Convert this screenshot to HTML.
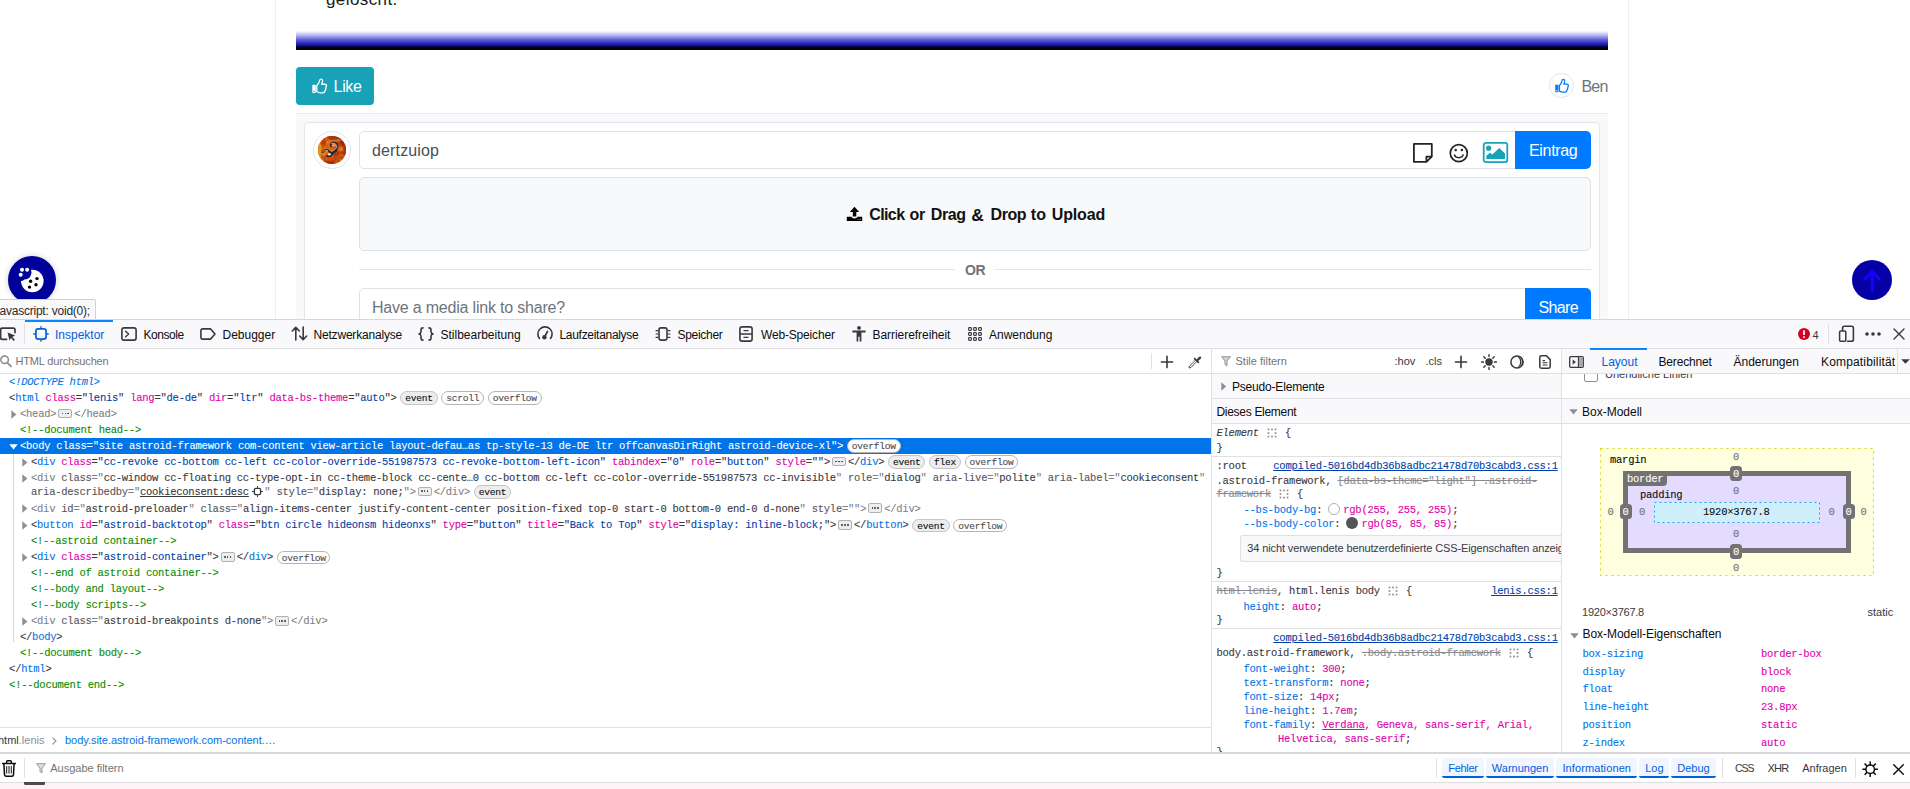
<!DOCTYPE html>
<html lang="de">
<head>
<meta charset="utf-8">
<title>DevTools</title>
<style>
html,body{margin:0;padding:0;}
body{width:1910px;height:789px;position:relative;overflow:hidden;background:#fff;font-family:"Liberation Sans",sans-serif;color:#0c0c0d;}
.a{position:absolute;white-space:nowrap;}
.b{position:absolute;box-sizing:border-box;}
.ui{font-family:"Liberation Sans",sans-serif;font-size:12px;line-height:16px;color:#0c0c0d;}
.m{font-family:"Liberation Mono",monospace;font-size:10.5px;letter-spacing:-0.25px;line-height:16px;color:#38383d;-webkit-text-stroke:.1px;}
svg{position:absolute;overflow:visible;}
/* markup colours */
.tg{color:#0074e8}.an{color:#dd00a9}.av{color:#003eaa}.cm{color:#058b00}.pn{color:#38383d}
.gr,.gr .tg,.gr .pn{color:#808085}
.gr .an{color:#55555a}
.gr .av{color:#38383d}
.sel,.sel .tg,.sel .an,.sel .av,.sel .pn{color:#fff}
.bdg{display:inline-block;box-sizing:border-box;height:13.5px;padding:0 3.75px;margin-left:3.8px;border:1px solid #b4b4b8;border-radius:7px;background:#fff;font-family:"Liberation Mono",monospace;font-size:9.6px;letter-spacing:-.26px;line-height:13.8px;color:#4a4a4f;vertical-align:middle;position:relative;top:0;text-indent:.2px;}
.bdg.ev{background:#ededf0;color:#0c0c0d;border-color:#c4c4c8;}
.ell{display:inline-block;position:relative;box-sizing:border-box;width:14px;height:9.5px;margin:0 2px 0 2px;border:1px solid #b1b1b3;border-radius:2px;background:#ededf0;vertical-align:middle;top:-.5px;}
.ell i{position:absolute;top:2.7px;width:1.6px;height:1.6px;background:#38383d;border-radius:1px;}
.tgt{position:relative;display:inline-block;width:11px;height:11px;margin:0 1.5px 0 3px;vertical-align:middle;top:-.5px;}
.tw{position:absolute;width:0;height:0;border-top:4px solid transparent;border-bottom:4px solid transparent;border-left:5px solid #8e8e93;}
/* rules colours */
.pr{color:#0074e8}.vl{color:#dd00a9}.st{color:#8a8a8f;text-decoration:line-through}
.lk{color:#003eaa;text-decoration:underline}
.m.r{color:#38383d}
.hl{position:relative;display:inline-block;vertical-align:middle;top:-.5px;margin:0 2px 0 2px;}
.sw{display:inline-block;box-sizing:border-box;width:12px;height:12px;border-radius:50%;vertical-align:middle;position:relative;top:-1.2px;margin:0 3px 0 0;}
</style>
</head>
<body>

<!-- ================= WEB PAGE (top) ================= -->
<div id="page" class="b" style="left:0;top:0;width:1910px;height:319px;overflow:hidden;background:#fff;">
  <!-- card side borders -->
  <div class="b" style="left:275px;top:0;width:1px;height:319px;background:#efefef;"></div>
  <div class="b" style="left:1628px;top:0;width:1px;height:319px;background:#efefef;"></div>
  <!-- cut-off text -->
  <div class="a" id="t_gel" style="left:326px;top:-12px;font-size:17px;letter-spacing:.4px;line-height:24px;color:#1a1a1a;">gelöscht.</div>
  <!-- gradient bar -->
  <div class="b" style="left:296px;top:31px;width:1312px;height:19px;background:linear-gradient(to bottom,#fcfcff 0%,#dcdcf8 10.5%,#a8a8ec 26%,#5c5cd6 47%,#2e2ec0 63%,#1616a0 74%,#08084c 81.5%,#000008 86%,#000 100%);"></div>
  <!-- Like button -->
  <div class="b" style="left:296px;top:67px;width:78px;height:38px;border-radius:4px;background:#17a2b8;"></div>
  <div class="a" id="t_like" style="left:333.6px;top:75px;letter-spacing:-.35px;font-size:16px;line-height:24px;color:#fff;">Like</div>
  <!-- Ben -->
  <div class="b" style="left:1549px;top:73px;width:25px;height:25px;border-radius:50%;border:1px solid #e4e6ea;background:#fff;"></div>
  <div class="a" id="t_ben" style="left:1581.5px;top:75px;letter-spacing:-.8px;font-size:16px;line-height:24px;color:#6c757d;">Ben</div>
  <!-- grey container -->
  <div class="b" style="left:296px;top:113px;width:1312px;height:210px;background:#f8f9fa;border-top:1px solid #e9ecef;"></div>
  <!-- inner card -->
  <div class="b" style="left:304px;top:122px;width:1296px;height:210px;background:#fff;border:1px solid #e3e6ea;border-radius:5px;"></div>
  <!-- avatar -->
  <div class="b" style="left:313px;top:131px;width:38px;height:38px;border-radius:50%;border:1px solid #e2e4e8;background:#fff;"></div>
  <div class="b" id="avatar" style="left:318px;top:136px;width:28px;height:28px;border-radius:50%;"></div>
  <!-- input -->
  <div class="b" style="left:359px;top:131px;width:1157px;height:38px;border:1px solid #dee2e6;border-radius:5px 0 0 5px;background:#fff;"></div>
  <div class="a" id="t_inp" style="left:372px;top:139px;letter-spacing:.15px;font-size:16px;line-height:24px;color:#495057;">dertzuiop</div>
  <!-- Eintrag -->
  <div class="b" style="left:1515px;top:131px;width:76px;height:38px;background:#007bff;border-radius:0 5px 5px 0;"></div>
  <div class="a" id="t_eintrag" style="left:1529px;top:139px;letter-spacing:-.33px;font-size:16px;line-height:24px;color:#fff;">Eintrag</div>
  <!-- upload box -->
  <div class="b" style="left:359px;top:177px;width:1232px;height:74px;border:1px solid #dee2e6;border-radius:5px;background:#f8f9fa;"></div>
  <div class="a" id="t_u0" style="letter-spacing:-0.6px;left:869.2px;top:202.5px;font-size:16px;line-height:24px;font-weight:bold;color:#111;">Click</div><div class="a" id="t_u1" style="letter-spacing:-0.35px;left:909.5px;top:202.5px;font-size:16px;line-height:24px;font-weight:bold;color:#111;">or</div><div class="a" id="t_u2" style="letter-spacing:-0.35px;left:930.7px;top:202.5px;font-size:16px;line-height:24px;font-weight:bold;color:#111;">Drag</div><div class="a" id="t_u3" style="left:971.3px;top:202.5px;font-size:17.4px;line-height:24px;font-weight:bold;color:#111;">&amp;</div><div class="a" id="t_u4" style="letter-spacing:-0.47px;left:990.6px;top:202.5px;font-size:16px;line-height:24px;font-weight:bold;color:#111;">Drop</div><div class="a" id="t_u5" style="left:1030.8px;top:202.5px;font-size:16px;line-height:24px;font-weight:bold;color:#111;">to</div><div class="a" id="t_u6" style="letter-spacing:-0.17px;left:1051.8px;top:202.5px;font-size:16px;line-height:24px;font-weight:bold;color:#111;">Upload</div>
  <!-- OR -->
  <div class="b" style="left:359px;top:269px;width:596px;height:1px;background:#e3e6ea;"></div>
  <div class="b" style="left:994px;top:269px;width:597px;height:1px;background:#e3e6ea;"></div>
  <div class="a" id="t_or" style="left:965px;top:258px;letter-spacing:-.5px;font-size:14px;line-height:24px;font-weight:bold;color:#6c757d;">OR</div>
  <!-- media link input -->
  <div class="b" style="left:359px;top:288px;width:1167px;height:38px;border:1px solid #dee2e6;border-radius:5px 0 0 5px;background:#fff;"></div>
  <div class="a" id="t_media" style="left:372px;top:296px;letter-spacing:-.2px;font-size:16px;line-height:24px;color:#6c757d;">Have a media link to share?</div>
  <div class="b" style="left:1525px;top:288px;width:66px;height:38px;background:#007bff;border-radius:0 5px 0 0;"></div>
  <div class="a" id="t_share" style="left:1538.5px;top:296px;letter-spacing:-.66px;font-size:16px;line-height:24px;color:#fff;">Share</div>
  <!-- cookie button -->
  <div class="b" style="left:8px;top:255.5px;width:48px;height:48px;border-radius:50%;background:#00009a;box-shadow:0 0 6px rgba(0,0,0,.18);"></div>
  <!-- back to top -->
  <div class="b" style="left:1852px;top:260px;width:40px;height:40px;border-radius:50%;background:#0500a6;"></div>

  <!-- like thumb -->
  <svg style="left:311.5px;top:77.6px;" width="15.2" height="15.8" viewBox="0 0 15.8 16"><rect x="0.3" y="6.9" width="3.6" height="8.4" rx=".6" fill="#fff"/><circle cx="2" cy="13.6" r=".7" fill="#17a2b8"/><path d="M5 14.1 L5 7.7 C6.3 6.6 7.3 4.9 7.7 3 C7.9 1.7 8.5 0.9 9.4 0.9 C10.6 0.9 11.1 2.1 10.9 3.5 C10.7 4.7 10.3 5.6 10 6.3 L13.3 6.3 C14.5 6.3 15.1 7.1 15.1 7.9 C15.1 8.6 14.8 9.1 14.4 9.4 C14.8 10.2 14.6 11 14 11.5 C14.2 12.3 13.9 13 13.3 13.4 C13.3 14.5 12.5 15.2 11.3 15.2 L8.7 15.2 C7.2 15.2 6.2 14.7 5 14.1 Z" fill="none" stroke="#fff" stroke-width="1.35" stroke-linejoin="round"/></svg>
  <!-- ben thumb -->
  <svg style="left:1554.5px;top:77.8px;" width="14" height="15.4" viewBox="0 0 15.8 16"><rect x="0.3" y="6.9" width="3.6" height="8.4" rx=".6" fill="#007bff"/><circle cx="2" cy="13.6" r=".7" fill="#fff"/><path d="M5 14.1 L5 7.7 C6.3 6.6 7.3 4.9 7.7 3 C7.9 1.7 8.5 0.9 9.4 0.9 C10.6 0.9 11.1 2.1 10.9 3.5 C10.7 4.7 10.3 5.6 10 6.3 L13.3 6.3 C14.5 6.3 15.1 7.1 15.1 7.9 C15.1 8.6 14.8 9.1 14.4 9.4 C14.8 10.2 14.6 11 14 11.5 C14.2 12.3 13.9 13 13.3 13.4 C13.3 14.5 12.5 15.2 11.3 15.2 L8.7 15.2 C7.2 15.2 6.2 14.7 5 14.1 Z" fill="none" stroke="#007bff" stroke-width="1.45" stroke-linejoin="round"/></svg>
  <!-- sticky note -->
  <svg style="left:1412px;top:142px;" width="22" height="22" viewBox="0 0 22 22"><path d="M1.9 1.9 H19.8 V14.6 L14.4 19.9 H1.9 Z" fill="#fff" stroke="#212529" stroke-width="1.8" stroke-linejoin="round"/><path d="M14.4 19.9 V14.6 H19.8" fill="none" stroke="#212529" stroke-width="1.8" stroke-linejoin="round"/></svg>
  <!-- smiley -->
  <svg style="left:1448px;top:143px;" width="22" height="22" viewBox="0 0 22 22"><circle cx="10.8" cy="10.2" r="8.5" fill="#fff" stroke="#212529" stroke-width="1.7"/><circle cx="7.7" cy="7.1" r="1.25" fill="#212529"/><circle cx="13.9" cy="7.1" r="1.25" fill="#212529"/><path d="M6.5 11.9 C7.6 15.6 14 15.6 15.1 11.9" fill="none" stroke="#212529" stroke-width="1.5" stroke-linecap="round"/></svg>
  <!-- image icon -->
  <svg style="left:1482px;top:141px;" width="27" height="23" viewBox="0 0 27 23"><rect x="1.7" y="1.9" width="23.6" height="19.2" rx="2.2" fill="#fff" stroke="#17a2b8" stroke-width="1.8"/><circle cx="6.7" cy="7.2" r="2.6" fill="#17a2b8"/><path d="M4.3 17.9 V14.8 L8 11.7 L10.3 13.5 L17.2 7 L23 12.4 V17.9 Z" fill="#17a2b8"/></svg>
  <!-- upload icon -->
  <svg style="left:846px;top:206px;" width="17" height="16" viewBox="0 0 17 16"><path d="M8.5 0.8 L13.2 5.9 H10.3 V10.4 H6.8 V5.9 H3.8 Z" fill="#000"/><path d="M0.8 10.8 H5.6 C5.9 11.9 7 12.4 8.5 12.4 C10 12.4 11.1 11.9 11.4 10.8 H16.2 V14.9 H0.8 Z" fill="#000"/><rect x="11.6" y="12.9" width="1.1" height="1" fill="#2a8fd0"/><rect x="13.6" y="12.9" width="1.1" height="1" fill="#e8a040"/></svg>
  <!-- cookie -->
  <svg style="left:8px;top:255.5px;" width="48" height="48" viewBox="0 0 48 48"><circle cx="24.3" cy="25" r="11.3" fill="#fff"/><circle cx="16.6" cy="16.6" r="6.9" fill="#00009a"/><circle cx="13.2" cy="21.5" r="3.4" fill="#00009a"/><circle cx="14" cy="13.8" r="2" fill="#fff"/><circle cx="19.1" cy="13.8" r="2" fill="#fff"/><circle cx="12.7" cy="18.8" r="2" fill="#fff"/><circle cx="29" cy="22.6" r="1.7" fill="#000"/><circle cx="22.6" cy="25.2" r="1.7" fill="#000"/><circle cx="28" cy="28.7" r="1.7" fill="#000"/><circle cx="21.5" cy="31.1" r="1.7" fill="#000"/></svg>
  <!-- up arrow -->
  <svg style="left:1852px;top:260px;" width="40" height="40" viewBox="0 0 40 40"><path d="M20.2 30.2 V11.8 M13.3 18.8 L20.2 11.6 L27.2 18.8" fill="none" stroke="#1a00ff" stroke-width="3" stroke-linecap="round" stroke-linejoin="round"/></svg>
  <!-- avatar texture -->
  <svg style="left:318px;top:136px;" width="28" height="28" viewBox="0 0 28 28"><defs><clipPath id="avc"><circle cx="14" cy="14" r="14"/></clipPath><radialGradient id="avg" cx="35%" cy="45%" r="70%"><stop offset="0" stop-color="#ef7a12"/><stop offset=".55" stop-color="#d84a08"/><stop offset="1" stop-color="#8c1c04"/></radialGradient></defs><filter id="fd" x="0" y="0" width="100%" height="100%"><feTurbulence type="fractalNoise" baseFrequency="0.16" numOctaves="2" seed="7"/><feColorMatrix type="matrix" values="0 0 0 0 0.42  0 0 0 0 0.06  0 0 0 0 0.01  2.6 0 0 0 -1.05"/></filter><filter id="fy" x="0" y="0" width="100%" height="100%"><feTurbulence type="fractalNoise" baseFrequency="0.14" numOctaves="2" seed="21"/><feColorMatrix type="matrix" values="0 0 0 0 0.98  0 0 0 0 0.66  0 0 0 0 0.08  0 2.8 0 0 -1.25"/></filter><g clip-path="url(#avc)"><rect width="28" height="28" fill="url(#avg)"/><rect width="28" height="28" filter="url(#fy)"/><rect width="28" height="28" filter="url(#fd)"/><path d="M0 8 C3 6 5 12 3 16 C2 20 5 24 2 27 L0 28 Z" fill="#f39a18" opacity=".85"/><path d="M8 0 C10 4 14 2 16 5 C18 2 22 3 24 1 L24 0 Z" fill="#a62605" opacity=".8"/><path d="M20 6 C24 8 26 12 27 17 C28 21 25 25 21 27 L28 28 L28 4 Z" fill="#a32404" opacity=".75"/><path d="M6 22 C9 26 14 27 19 26 L16 28 L5 28 Z" fill="#9a2204" opacity=".7"/><path d="M4 4 C6 3 9 5 8 8 C7 10 4 9 3 7 Z" fill="#b83006" opacity=".7"/><path d="M5 16.2 C6.5 13.8 9 13.2 10.4 14.6 C11.2 16 12.4 16.6 14.2 15.8 C16.8 14.6 19.4 12.8 19.6 10 C19.8 7.4 17.2 6 14.6 6.6 C12.6 7.2 12.2 9.2 13.4 10.4" fill="none" stroke="#2b2422" stroke-width="1.9" stroke-linecap="round"/><path d="M9.4 20 C11.4 20.6 13.4 19.6 14.4 17.6 C15 16.2 17 15.4 18.6 14.6" fill="none" stroke="#2b2422" stroke-width="2.2" stroke-linecap="round"/><path d="M5.4 15.8 C6.8 14.2 8.6 13.8 9.8 14.8 M13.6 15.4 C16 14.4 18.4 12.8 18.8 10.4 M13.4 7.6 C15 6.8 17.6 7.2 18.4 9" fill="none" stroke="#c9c9c9" stroke-width=".9" stroke-linecap="round"/><ellipse cx="11.3" cy="18.6" rx="1.5" ry="1" fill="#fff"/><ellipse cx="15.5" cy="9.6" rx="2" ry="1" fill="#e8a89a"/><path d="M15.6 17.6 L16.4 20.6 M17.2 16.8 L18.4 19.6 M18.8 16 L20.2 18.6" stroke="#5a1a0c" stroke-width=".7"/></g></svg>
  <!-- status tooltip -->
  <div class="b" style="left:-1px;top:299px;width:97px;height:21px;background:#f9f9fa;border:1px solid #d0d0d4;border-radius:0 2px 0 0;"></div>
  <div class="a ui" id="t_js" style="left:-3px;top:303px;letter-spacing:-.22px;color:#2a2a2e;">javascript: void(0);</div>
</div>

<!-- ================= DEVTOOLS ================= -->
<div id="dt" class="b" style="left:0;top:319px;width:1910px;height:470px;background:#fff;border-top:1px solid #d7d7db;">
</div>

<!-- toolbar -->
<div class="b" style="left:0;top:320px;width:1910px;height:28px;background:#f9f9fb;"></div>
<div class="b" style="left:0;top:348px;width:1910px;height:1px;background:#e0e0e2;"></div>
<div class="b" style="left:25px;top:320px;width:88px;height:2px;background:#0a84ff;"></div>
<div class="b" style="left:24px;top:324px;width:1px;height:20px;background:#e0e0e2;"></div>
<!-- picker -->
<svg style="left:0;top:326px;" width="17" height="16" viewBox="0 0 17 16"><path d="M6.6 13.3 H2.4 C1.3 13.3 0.6 12.6 0.6 11.5 V4 C0.6 2.9 1.3 2.2 2.4 2.2 H13.2 C14.3 2.2 15 2.9 15 4 V6.6" fill="none" stroke="#38383d" stroke-width="1.7" stroke-linecap="round"/><path d="M7.6 6.6 L15.2 9.6 L12.2 10.9 L14.9 13.8 L13.7 14.9 L11 12 L9.4 14.6 Z" fill="#38383d"/></svg>
<!-- inspector icon -->
<svg style="left:33px;top:326px;" width="16" height="16" viewBox="0 0 16 16"><rect x="2.9" y="2.9" width="10.2" height="10.2" rx="2.3" fill="none" stroke="#0060df" stroke-width="1.7"/><path d="M8 0.3 V2.4 M8 13.6 V15.7 M0.3 8 H2.4 M13.6 8 H15.7" stroke="#0060df" stroke-width="1.3"/></svg>
<div class="a ui" id="d_insp" style="left:55px;top:327px;color:#0060df;">Inspektor</div>
<!-- console icon -->
<svg style="left:121px;top:327px;" width="16" height="14" viewBox="0 0 16 14"><rect x="0.9" y="0.9" width="14.2" height="12.2" rx="2.2" fill="none" stroke="#38383d" stroke-width="1.6"/><path d="M4.6 4.2 L7.6 7 L4.6 9.8" fill="none" stroke="#38383d" stroke-width="1.4" stroke-linecap="round" stroke-linejoin="round"/></svg>
<div class="a ui" id="d_kons" style="letter-spacing:-.44px;left:143.5px;top:327px;">Konsole</div>
<!-- debugger icon -->
<svg style="left:200px;top:328px;" width="16" height="12" viewBox="0 0 16 12"><path d="M2.6 0.9 H10.6 L15 6 L10.6 11.1 H2.6 C1.6 11.1 0.9 10.4 0.9 9.4 V2.6 C0.9 1.6 1.6 0.9 2.6 0.9 Z" fill="none" stroke="#38383d" stroke-width="1.6" stroke-linejoin="round"/></svg>
<div class="a ui" id="d_debu" style="left:222.5px;top:327px;">Debugger</div>
<!-- network icon -->
<svg style="left:291px;top:326px;" width="17" height="15" viewBox="0 0 17 15"><path d="M4.8 14 V1.6 M1.3 5 L4.8 1.4 L8.3 5 M12.2 1 V13.4 M8.7 10 L12.2 13.6 L15.7 10" fill="none" stroke="#38383d" stroke-width="1.6" stroke-linecap="round" stroke-linejoin="round"/></svg>
<div class="a ui" id="d_netz" style="letter-spacing:-.19px;left:313.5px;top:327px;">Netzwerkanalyse</div>
<!-- style editor icon -->
<svg style="left:418px;top:327px;" width="16" height="14" viewBox="0 0 16 14"><path d="M5 0.9 C3.4 0.9 3 1.7 3 3 V4.6 C3 5.9 2.4 6.7 1 7 C2.4 7.3 3 8.1 3 9.4 V11 C3 12.3 3.4 13.1 5 13.1 M11 0.9 C12.6 0.9 13 1.7 13 3 V4.6 C13 5.9 13.6 6.7 15 7 C13.6 7.3 13 8.1 13 9.4 V11 C13 12.3 12.6 13.1 11 13.1" fill="none" stroke="#38383d" stroke-width="1.6" stroke-linecap="round" stroke-linejoin="round"/></svg>
<div class="a ui" id="d_stil" style="left:440.5px;top:327px;">Stilbearbeitung</div>
<!-- performance icon -->
<svg style="left:537px;top:326px;" width="16" height="14" viewBox="0 0 16 14"><path d="M2.5 12.4 C1.4 11 0.9 9.6 0.9 8 C0.9 4 4 0.9 8 0.9 C12 0.9 15.1 4 15.1 8 C15.1 9.6 14.6 11 13.5 12.4" fill="none" stroke="#38383d" stroke-width="1.6" stroke-linecap="round"/><circle cx="7.4" cy="11.3" r="2.2" fill="#38383d"/><path d="M7.6 11 L10.5 5.4" stroke="#38383d" stroke-width="1.7" stroke-linecap="round"/></svg>
<div class="a ui" id="d_lauf" style="letter-spacing:-.3px;left:559.5px;top:327px;">Laufzeitanalyse</div>
<!-- memory icon -->
<svg style="left:655px;top:327px;" width="16" height="14" viewBox="0 0 16 14"><rect x="4" y="0.9" width="8" height="12.2" rx="2" fill="none" stroke="#38383d" stroke-width="1.6"/><path d="M0.6 3.6 H3 M0.6 7 H3 M0.6 10.4 H3 M13 3.6 H15.4 M13 7 H15.4 M13 10.4 H15.4" stroke="#38383d" stroke-width="1.1"/></svg>
<div class="a ui" id="d_spei" style="letter-spacing:-.3px;left:677.5px;top:327px;">Speicher</div>
<!-- storage icon -->
<svg style="left:739px;top:326px;" width="14" height="16" viewBox="0 0 14 16"><rect x="0.9" y="0.9" width="12.2" height="14.2" rx="2.2" fill="none" stroke="#38383d" stroke-width="1.6"/><path d="M1 8 H13 M4.5 4.6 H9.5 M4.5 11.4 H9.5" stroke="#38383d" stroke-width="1.3"/></svg>
<div class="a ui" id="d_webs" style="letter-spacing:-.175px;left:761px;top:327px;">Web-Speicher</div>
<!-- accessibility icon -->
<svg style="left:852px;top:326px;" width="14" height="16" viewBox="0 0 14 16"><circle cx="7" cy="1.9" r="1.9" fill="#38383d"/><path d="M0.4 4.6 H13.6 V6.6 H9.4 V15.6 H7.7 V10.8 H6.3 V15.6 H4.6 V6.6 H0.4 Z" fill="#38383d"/></svg>
<div class="a ui" id="d_barr" style="letter-spacing:-.05px;left:872.5px;top:327px;">Barrierefreiheit</div>
<!-- application icon -->
<svg style="left:968px;top:327px;" width="14" height="14" viewBox="0 0 14 14"><g fill="none" stroke="#38383d" stroke-width="1.1"><rect x="0.6" y="0.6" width="2.8" height="2.8" rx=".8"/><rect x="5.6" y="0.6" width="2.8" height="2.8" rx=".8"/><rect x="10.6" y="0.6" width="2.8" height="2.8" rx=".8"/><rect x="0.6" y="5.6" width="2.8" height="2.8" rx=".8"/><rect x="5.6" y="5.6" width="2.8" height="2.8" rx=".8"/><rect x="10.6" y="5.6" width="2.8" height="2.8" rx=".8"/><rect x="0.6" y="10.6" width="2.8" height="2.8" rx=".8"/><rect x="5.6" y="10.6" width="2.8" height="2.8" rx=".8"/><rect x="10.6" y="10.6" width="2.8" height="2.8" rx=".8"/></g></svg>
<div class="a ui" id="d_anwe" style="left:989px;top:327px;">Anwendung</div>
<!-- right controls -->
<svg style="left:1798px;top:328px;" width="12" height="12" viewBox="0 0 12 12"><circle cx="6" cy="6" r="6" fill="#d70022"/><rect x="5.1" y="2.2" width="1.8" height="4.8" rx=".5" fill="#fff"/><rect x="5.1" y="8.2" width="1.8" height="1.7" rx=".4" fill="#fff"/></svg>
<div class="a ui" id="d_four" style="left:1812.5px;top:327px;color:#38383d;font-size:11px;">4</div>
<div class="b" style="left:1828px;top:324px;width:1px;height:20px;background:#e0e0e2;"></div>
<svg style="left:1838px;top:325px;" width="17" height="18" viewBox="0 0 17 18"><path d="M4.6 5 V3 C4.6 1.9 5.3 1.2 6.4 1.2 H13.6 C14.7 1.2 15.4 1.9 15.4 3 V14.4 C15.4 15.5 14.7 16.2 13.6 16.2 H9.6" fill="none" stroke="#38383d" stroke-width="1.6" stroke-linecap="round"/><rect x="1.6" y="6" width="6.2" height="10.2" rx="1" fill="none" stroke="#38383d" stroke-width="1.5"/></svg>
<svg style="left:1864px;top:331px;" width="18" height="6" viewBox="0 0 18 6"><circle cx="3" cy="3" r="1.8" fill="#38383d"/><circle cx="9" cy="3" r="1.8" fill="#38383d"/><circle cx="15" cy="3" r="1.8" fill="#38383d"/></svg>
<svg style="left:1893px;top:328px;" width="12" height="12" viewBox="0 0 12 12"><path d="M1 1 L11 11 M11 1 L1 11" stroke="#38383d" stroke-width="1.4" stroke-linecap="round"/></svg>

<!-- markup view -->
<div class="b" style="left:0;top:438px;width:1211px;height:16px;background:#0074e8;"></div>
<div class="b" style="left:13px;top:454px;width:1px;height:188px;background:#d7d7db;"></div>
<div class="a m " id="m1" style="left:9.1px;top:374px;"><span class="tg" style="font-style:italic">&lt;!DOCTYPE html&gt;</span></div>
<div class="a m " id="m2" style="left:9.1px;top:390px;"><span class="pn">&lt;</span><span class="tg">html</span> <span class="an">class</span><span class="pn">=&quot;</span><span class="av">lenis</span><span class="pn">&quot;</span> <span class="an">lang</span><span class="pn">=&quot;</span><span class="av">de-de</span><span class="pn">&quot;</span> <span class="an">dir</span><span class="pn">=&quot;</span><span class="av">ltr</span><span class="pn">&quot;</span> <span class="an">data-bs-theme</span><span class="pn">=&quot;</span><span class="av">auto</span><span class="pn">&quot;</span><span class="pn">&gt;</span><span class="bdg ev">event</span><span class="bdg">scroll</span><span class="bdg">overflow</span></div>
<svg style="left:11px;top:409.5px;" width="6" height="9" viewBox="0 0 6 9"><path d="M0.3 0.3 L5.4 4.5 L0.3 8.7 Z" fill="#8e8e93"/></svg>
<div class="a m gr" id="m3" style="left:20px;top:406px;"><span class="pn">&lt;</span><span class="tg">head</span><span class="pn">&gt;</span><span class="ell"><i style="left:2.4px"></i><i style="left:5.2px"></i><i style="left:8px"></i></span><span class="pn">&lt;/</span><span class="tg">head</span><span class="pn">&gt;</span></div>
<div class="a m " id="m4" style="left:20px;top:422px;"><span class="cm">&lt;!--document head--&gt;</span></div>
<svg style="left:9px;top:443.5px;" width="9" height="6" viewBox="0 0 9 6"><path d="M0.3 0.3 L8.7 0.3 L4.5 5.6 Z" fill="#fff"/></svg>
<div class="a m sel" id="m5" style="left:20px;top:438px;"><span class="pn">&lt;</span><span class="tg">body</span> <span class="an">class</span><span class="pn">=&quot;</span><span class="av">site astroid-framework com-content view-article layout-defau…as tp-style-13 de-DE ltr offcanvasDirRight astroid-device-xl</span><span class="pn">&quot;</span><span class="pn">&gt;</span><span class="bdg">overflow</span></div>
<svg style="left:22px;top:457.5px;" width="6" height="9" viewBox="0 0 6 9"><path d="M0.3 0.3 L5.4 4.5 L0.3 8.7 Z" fill="#8e8e93"/></svg>
<div class="a m " id="m6" style="left:31px;top:454px;"><span class="pn">&lt;</span><span class="tg">div</span> <span class="an">class</span><span class="pn">=&quot;</span><span class="av">cc-revoke cc-bottom cc-left cc-color-override-551987573 cc-revoke-bottom-left-icon</span><span class="pn">&quot;</span> <span class="an">tabindex</span><span class="pn">=&quot;</span><span class="av">0</span><span class="pn">&quot;</span> <span class="an">role</span><span class="pn">=&quot;</span><span class="av">button</span><span class="pn">&quot;</span> <span class="an">style</span><span class="pn">=&quot;</span><span class="av"></span><span class="pn">&quot;</span><span class="pn">&gt;</span><span class="ell"><i style="left:2.4px"></i><i style="left:5.2px"></i><i style="left:8px"></i></span><span class="pn">&lt;/</span><span class="tg">div</span><span class="pn">&gt;</span><span class="bdg ev">event</span><span class="bdg ev">flex</span><span class="bdg">overflow</span></div>
<svg style="left:22px;top:473.5px;" width="6" height="9" viewBox="0 0 6 9"><path d="M0.3 0.3 L5.4 4.5 L0.3 8.7 Z" fill="#8e8e93"/></svg>
<div class="a m gr" id="m7" style="left:31px;top:470px;"><span class="pn">&lt;</span><span class="tg">div</span> <span class="an">class</span><span class="pn">=&quot;</span><span class="av">cc-window cc-floating cc-type-opt-in cc-theme-block cc-cente…0 cc-bottom cc-left cc-color-override-551987573 cc-invisible</span><span class="pn">&quot;</span> <span class="an">role</span><span class="pn">=&quot;</span><span class="av">dialog</span><span class="pn">&quot;</span> <span class="an">aria-live</span><span class="pn">=&quot;</span><span class="av">polite</span><span class="pn">&quot;</span> <span class="an">aria-label</span><span class="pn">=&quot;</span><span class="av">cookieconsent</span><span class="pn">&quot;</span></div>
<div class="a m gr" id="m7b" style="left:31px;top:483.6px;"><span class="an">aria-describedby</span><span class="pn">=&quot;</span><span class="av" style="text-decoration:underline">cookieconsent:desc</span><svg class="tgt" width="12" height="12" viewBox="0 0 12 12"><rect x="2.6" y="2.6" width="6.8" height="6.8" rx="1.6" fill="none" stroke="#38383d" stroke-width="1.5"/><path d="M6 0 V2 M6 10 V12 M0 6 H2 M10 6 H12" stroke="#38383d" stroke-width="1.1"/></svg><span class="pn">&quot;</span> <span class="an">style</span><span class="pn">=&quot;</span><span class="av">display: none;</span><span class="pn">&quot;&gt;</span><span class="ell"><i style="left:2.4px"></i><i style="left:5.2px"></i><i style="left:8px"></i></span><span class="pn">&lt;/</span><span class="tg">div</span><span class="pn">&gt;</span><span class="bdg ev">event</span></div>
<svg style="left:22px;top:504px;" width="6" height="9" viewBox="0 0 6 9"><path d="M0.3 0.3 L5.4 4.5 L0.3 8.7 Z" fill="#8e8e93"/></svg>
<div class="a m gr" id="m8" style="left:31px;top:500.5px;"><span class="pn">&lt;</span><span class="tg">div</span> <span class="an">id</span><span class="pn">=&quot;</span><span class="av">astroid-preloader</span><span class="pn">&quot;</span> <span class="an">class</span><span class="pn">=&quot;</span><span class="av">align-items-center justify-content-center position-fixed top-0 start-0 bottom-0 end-0 d-none</span><span class="pn">&quot;</span> <span class="an">style</span><span class="pn">=&quot;</span><span class="av"></span><span class="pn">&quot;</span><span class="pn">&gt;</span><span class="ell"><i style="left:2.4px"></i><i style="left:5.2px"></i><i style="left:8px"></i></span><span class="pn">&lt;/</span><span class="tg">div</span><span class="pn">&gt;</span></div>
<svg style="left:22px;top:520.8px;" width="6" height="9" viewBox="0 0 6 9"><path d="M0.3 0.3 L5.4 4.5 L0.3 8.7 Z" fill="#8e8e93"/></svg>
<div class="a m " id="m9" style="left:31px;top:517.3px;"><span class="pn">&lt;</span><span class="tg">button</span> <span class="an">id</span><span class="pn">=&quot;</span><span class="av">astroid-backtotop</span><span class="pn">&quot;</span> <span class="an">class</span><span class="pn">=&quot;</span><span class="av">btn circle hideonsm hideonxs</span><span class="pn">&quot;</span> <span class="an">type</span><span class="pn">=&quot;</span><span class="av">button</span><span class="pn">&quot;</span> <span class="an">title</span><span class="pn">=&quot;</span><span class="av">Back to Top</span><span class="pn">&quot;</span> <span class="an">style</span><span class="pn">=&quot;</span><span class="av">display: inline-block;</span><span class="pn">&quot;</span><span class="pn">&gt;</span><span class="ell"><i style="left:2.4px"></i><i style="left:5.2px"></i><i style="left:8px"></i></span><span class="pn">&lt;/</span><span class="tg">button</span><span class="pn">&gt;</span><span class="bdg ev">event</span><span class="bdg">overflow</span></div>
<div class="a m " id="m10" style="left:31px;top:533.3px;"><span class="cm">&lt;!--astroid container--&gt;</span></div>
<svg style="left:22px;top:552.8px;" width="6" height="9" viewBox="0 0 6 9"><path d="M0.3 0.3 L5.4 4.5 L0.3 8.7 Z" fill="#8e8e93"/></svg>
<div class="a m " id="m11" style="left:31px;top:549.3px;"><span class="pn">&lt;</span><span class="tg">div</span> <span class="an">class</span><span class="pn">=&quot;</span><span class="av">astroid-container</span><span class="pn">&quot;</span><span class="pn">&gt;</span><span class="ell"><i style="left:2.4px"></i><i style="left:5.2px"></i><i style="left:8px"></i></span><span class="pn">&lt;/</span><span class="tg">div</span><span class="pn">&gt;</span><span class="bdg">overflow</span></div>
<div class="a m " id="m12" style="left:31px;top:565.3px;"><span class="cm">&lt;!--end of astroid container--&gt;</span></div>
<div class="a m " id="m13" style="left:31px;top:581.3px;"><span class="cm">&lt;!--body and layout--&gt;</span></div>
<div class="a m " id="m14" style="left:31px;top:597.3px;"><span class="cm">&lt;!--body scripts--&gt;</span></div>
<svg style="left:22px;top:616.8px;" width="6" height="9" viewBox="0 0 6 9"><path d="M0.3 0.3 L5.4 4.5 L0.3 8.7 Z" fill="#8e8e93"/></svg>
<div class="a m gr" id="m15" style="left:31px;top:613.3px;"><span class="pn">&lt;</span><span class="tg">div</span> <span class="an">class</span><span class="pn">=&quot;</span><span class="av">astroid-breakpoints d-none</span><span class="pn">&quot;</span><span class="pn">&gt;</span><span class="ell"><i style="left:2.4px"></i><i style="left:5.2px"></i><i style="left:8px"></i></span><span class="pn">&lt;/</span><span class="tg">div</span><span class="pn">&gt;</span></div>
<div class="a m " id="m16" style="left:20px;top:629.3px;"><span class="pn">&lt;/</span><span class="tg">body</span><span class="pn">&gt;</span></div>
<div class="a m " id="m17" style="left:20px;top:645.3px;"><span class="cm">&lt;!--document body--&gt;</span></div>
<div class="a m " id="m18" style="left:9.1px;top:661.3px;"><span class="pn">&lt;/</span><span class="tg">html</span><span class="pn">&gt;</span></div>
<div class="a m " id="m19" style="left:9.1px;top:677.3px;"><span class="cm">&lt;!--document end--&gt;</span></div>
<!-- search bar -->
<div class="b" style="left:0;top:373px;width:1211px;height:1px;background:#e0e0e2;"></div>
<svg style="left:0;top:355px;" width="12" height="12" viewBox="0 0 12 12"><circle cx="4.6" cy="4.8" r="3.8" fill="none" stroke="#8a8a8f" stroke-width="1.5"/><path d="M7.5 7.8 L11 11.3" stroke="#8a8a8f" stroke-width="1.7" stroke-linecap="round"/></svg>
<div class="a ui" id="s_html" style="left:15.5px;top:353px;color:#737373;font-size:11px;letter-spacing:-.16px;">HTML durchsuchen</div>
<div class="b" style="left:1151px;top:353px;width:1px;height:16px;background:#e0e0e2;"></div>
<svg style="left:1161px;top:356px;" width="12" height="12" viewBox="0 0 12 12"><path d="M6 0.4 V11.6 M0.4 6 H11.6" stroke="#38383d" stroke-width="1.6" stroke-linecap="round"/></svg>
<svg style="left:1188px;top:355px;" width="14" height="14" viewBox="0 0 14 14"><path d="M1 12.9 L1.4 11.2 L7.6 5 L9 6.4 L2.8 12.6 Z" fill="#fff" stroke="#38383d" stroke-width=".9" stroke-linejoin="round"/><path d="M6.6 3.6 L10.4 7.4" stroke="#38383d" stroke-width="1.7" stroke-linecap="round"/><path d="M8.2 5.2 L10.6 2.2 C11.3 1.4 12.3 1.2 12.9 1.8 C13.4 2.4 13.2 3.3 12.4 4 L9.6 6.4 Z" fill="#38383d"/></svg>
<!-- panel splitters -->
<div class="b" style="left:1211px;top:349px;width:1px;height:404px;background:#e0e0e2;"></div>
<!-- breadcrumbs -->
<div class="b" style="left:0;top:727px;width:1211px;height:1px;background:#e0e0e2;"></div>
<div class="a ui" id="s_bc1" style="left:-2px;top:731.8px;color:#38383d;font-size:11px;">html<span style="color:#8e8e93">.lenis</span></div>
<svg style="left:52px;top:736.5px;" width="5" height="8" viewBox="0 0 5 8"><path d="M0.8 0.8 L4 4 L0.8 7.2" fill="none" stroke="#8e8e93" stroke-width="1.1" stroke-linecap="round" stroke-linejoin="round"/></svg>
<div class="a ui" id="s_bc2" style="left:65px;top:731.8px;color:#0074e8;font-size:11px;letter-spacing:-.03px;">body.site.astroid-framework.com-content.…</div>

<!-- rules panel -->
<div class="b" style="left:1561px;top:349px;width:1px;height:404px;background:#e0e0e2;"></div>
<div class="b" style="left:1212px;top:373px;width:349px;height:1px;background:#e0e0e2;"></div>
<svg style="left:1221px;top:356px;" width="10" height="11" viewBox="0 0 10 11"><path d="M0.6 0.7 H9.4 L6 5 V10 L4 8.6 V5 Z" fill="#d0d0d4" stroke="#8e8e93" stroke-width=".9" stroke-linejoin="round"/></svg>
<div class="a ui" id="r_filt" style="left:1235.5px;top:353px;color:#737373;font-size:11px;">Stile filtern</div>
<div class="a ui" id="r_hov" style="left:1394.5px;top:353px;color:#38383d;font-size:11px;">:hov</div>
<div class="a ui" id="r_cls" style="left:1425.5px;top:353px;color:#38383d;font-size:11px;">.cls</div>
<svg style="left:1455px;top:356px;" width="12" height="12" viewBox="0 0 12 12"><path d="M6 0.4 V11.6 M0.4 6 H11.6" stroke="#38383d" stroke-width="1.6" stroke-linecap="round"/></svg>
<svg style="left:1481px;top:354px;" width="16" height="16" viewBox="0 0 16 16"><circle cx="8" cy="8" r="3.7" fill="#38383d"/><path d="M8 0.6 V2.6 M8 13.4 V15.4 M0.6 8 H2.6 M13.4 8 H15.4 M2.8 2.8 L4.2 4.2 M11.8 11.8 L13.2 13.2 M2.8 13.2 L4.2 11.8 M11.8 4.2 L13.2 2.8" stroke="#38383d" stroke-width="1.4" stroke-linecap="round"/></svg>
<svg style="left:1510px;top:355px;" width="14" height="14" viewBox="0 0 14 14"><circle cx="7" cy="7" r="6.1" fill="#fff" stroke="#38383d" stroke-width="1.5"/><path d="M7.4 1 A6 6 0 0 1 7.4 13 A4.6 6 0 0 0 7.4 1 Z" fill="#38383d"/><path d="M6.2 1 A6.05 6.05 0 0 1 6.2 13 A6.6 6.6 0 0 0 6.2 1 Z" fill="#38383d"/></svg>
<svg style="left:1539px;top:355px;" width="12" height="14" viewBox="0 0 12 14"><path d="M2.4 0.8 H7.4 L11.2 4.6 V11.6 C11.2 12.6 10.6 13.2 9.6 13.2 H2.4 C1.4 13.2 0.8 12.6 0.8 11.6 V2.4 C0.8 1.4 1.4 0.8 2.4 0.8 Z" fill="none" stroke="#38383d" stroke-width="1.5" stroke-linejoin="round"/><path d="M3.6 5.6 H6 M3.6 7.8 H8.4 M3.6 10 H8.4" stroke="#38383d" stroke-width="1.1"/></svg>
<div class="b" style="left:1212px;top:374px;width:349px;height:24px;background:#f9f9fb;"></div>
<div class="b" style="left:1212px;top:398px;width:349px;height:1px;background:#e0e0e2;"></div>
<svg style="left:1220.5px;top:381.5px;" width="6" height="9" viewBox="0 0 6 9"><path d="M0.3 0.3 L5.2 4.5 L0.3 8.7 Z" fill="#8e8e93"/></svg>
<div class="a ui" id="r_pseudo" style="letter-spacing:-.19px;left:1232px;top:378.5px;">Pseudo-Elemente</div>
<div class="b" style="left:1212px;top:399px;width:349px;height:24px;background:#f9f9fb;"></div>
<div class="b" style="left:1212px;top:423px;width:349px;height:1px;background:#e0e0e2;"></div>
<div class="a ui" id="r_dieses" style="letter-spacing:-.3px;left:1216.5px;top:404px;">Dieses Element</div>
<div class="a m r" id="r1" style="left:1216.5px;top:424.8px;"><i>Element</i> <svg class="hl" width="10" height="10" viewBox="0 0 10 10"><g fill="#8e8e93"><rect x="0.6" y="0.6" width="1.7" height="1.7"/><rect x="4.15" y="0.6" width="1.7" height="1.7"/><rect x="7.7" y="0.6" width="1.7" height="1.7"/><rect x="0.6" y="4.15" width="1.7" height="1.7"/><rect x="7.7" y="4.15" width="1.7" height="1.7"/><rect x="0.6" y="7.7" width="1.7" height="1.7"/><rect x="4.15" y="7.7" width="1.7" height="1.7"/><rect x="7.7" y="7.7" width="1.7" height="1.7"/></g></svg> {</div>
<div class="a m r"  style="left:1216.5px;top:439.7px;">}</div>
<div class="b" style="left:1212px;top:456px;width:349px;height:1px;background:#e0e0e2;"></div>
<div class="a m r" id="r2" style="left:1216.5px;top:457.6px;">:root</div>
<div class="a m lk" id="r2l" style="right:352.3px;top:457.6px;">compiled-5016bd4db36b8adbc21478d70b3cabd3.css:1</div>
<div class="a m r" id="r3" style="left:1216.5px;top:472.8px;">.astroid-framework, <span class="st">[data-bs-theme=&quot;light&quot;] .astroid-</span></div>
<div class="a m r" id="r4" style="left:1216.5px;top:486px;"><span class="st">framework</span> <svg class="hl" width="10" height="10" viewBox="0 0 10 10"><g fill="#8e8e93"><rect x="0.6" y="0.6" width="1.7" height="1.7"/><rect x="4.15" y="0.6" width="1.7" height="1.7"/><rect x="7.7" y="0.6" width="1.7" height="1.7"/><rect x="0.6" y="4.15" width="1.7" height="1.7"/><rect x="7.7" y="4.15" width="1.7" height="1.7"/><rect x="0.6" y="7.7" width="1.7" height="1.7"/><rect x="4.15" y="7.7" width="1.7" height="1.7"/><rect x="7.7" y="7.7" width="1.7" height="1.7"/></g></svg> {</div>
<div class="a m r" id="r5" style="left:1243.5px;top:501.8px;"><span class="pr">--bs-body-bg</span>: <span class="sw" style="background:#fff;border:1px solid #b1b1b3;"></span><span class="vl">rgb(255, 255, 255)</span>;</div>
<div class="a m r" id="r6" style="left:1243.5px;top:515.8px;"><span class="pr">--bs-body-color</span>: <span class="sw" style="background:#555;"></span><span class="vl">rgb(85, 85, 85)</span>;</div>
<div class="b" style="left:1240px;top:534.5px;width:321px;height:27px;background:#f9f9fb;border:1px solid #e0e0e2;border-right:none;border-radius:3px 0 0 3px;"></div>
<div class="b" style="left:1212px;top:530px;width:349px;height:36px;overflow:hidden;"><div class="a ui" id="r_unused" style="left:35.3px;top:10.4px;font-size:11px;letter-spacing:-.12px;color:#38383d;">34 nicht verwendete benutzerdefinierte CSS-Eigenschaften anzeigen</div></div>
<div class="a m r"  style="left:1216.5px;top:564.5px;">}</div>
<div class="b" style="left:1212px;top:581px;width:349px;height:1px;background:#e0e0e2;"></div>
<div class="a m r" id="r7" style="left:1216.5px;top:583px;"><span class="st">html.lenis</span>, html.lenis body <svg class="hl" width="10" height="10" viewBox="0 0 10 10"><g fill="#8e8e93"><rect x="0.6" y="0.6" width="1.7" height="1.7"/><rect x="4.15" y="0.6" width="1.7" height="1.7"/><rect x="7.7" y="0.6" width="1.7" height="1.7"/><rect x="0.6" y="4.15" width="1.7" height="1.7"/><rect x="7.7" y="4.15" width="1.7" height="1.7"/><rect x="0.6" y="7.7" width="1.7" height="1.7"/><rect x="4.15" y="7.7" width="1.7" height="1.7"/><rect x="7.7" y="7.7" width="1.7" height="1.7"/></g></svg> {</div>
<div class="a m lk" id="r7l" style="right:352.3px;top:583px;">lenis.css:1</div>
<div class="a m r" id="r8" style="left:1243.5px;top:598.5px;"><span class="pr">height</span>: <span class="vl">auto</span>;</div>
<div class="a m r"  style="left:1216.5px;top:611.5px;">}</div>
<div class="b" style="left:1212px;top:628px;width:349px;height:1px;background:#e0e0e2;"></div>
<div class="a m lk" id="r9l" style="right:352.3px;top:630.4px;">compiled-5016bd4db36b8adbc21478d70b3cabd3.css:1</div>
<div class="a m r" id="r10" style="left:1216.5px;top:645.2px;">body.astroid-framework, <span class="st">.body.astroid-framework</span> <svg class="hl" width="10" height="10" viewBox="0 0 10 10"><g fill="#8e8e93"><rect x="0.6" y="0.6" width="1.7" height="1.7"/><rect x="4.15" y="0.6" width="1.7" height="1.7"/><rect x="7.7" y="0.6" width="1.7" height="1.7"/><rect x="0.6" y="4.15" width="1.7" height="1.7"/><rect x="7.7" y="4.15" width="1.7" height="1.7"/><rect x="0.6" y="7.7" width="1.7" height="1.7"/><rect x="4.15" y="7.7" width="1.7" height="1.7"/><rect x="7.7" y="7.7" width="1.7" height="1.7"/></g></svg> {</div>
<div class="a m r" id="r11" style="left:1243.5px;top:661.2px;"><span class="pr">font-weight</span>: <span class="vl">300</span>;</div>
<div class="a m r" id="r12" style="left:1243.5px;top:675.3px;"><span class="pr">text-transform</span>: <span class="vl">none</span>;</div>
<div class="a m r" id="r13" style="left:1243.5px;top:688.5px;"><span class="pr">font-size</span>: <span class="vl">14px</span>;</div>
<div class="a m r" id="r14" style="left:1243.5px;top:702.6px;"><span class="pr">line-height</span>: <span class="vl">1.7em</span>;</div>
<div class="a m r" id="r15" style="left:1243.5px;top:717.4px;"><span class="pr">font-family</span>: <span class="vl"><span style="text-decoration:underline">Verdana</span>, Geneva, sans-serif, Arial,</span></div>
<div class="a m r" id="r16" style="left:1278px;top:730.5px;"><span class="vl">Helvetica, sans-serif</span>;</div>
<div class="a m r"  style="left:1216.5px;top:743.5px;">}</div>

<!-- layout panel -->
<div class="b" style="left:1562px;top:349px;width:348px;height:24px;background:#f9f9fb;"></div>
<div class="b" style="left:1562px;top:373px;width:348px;height:1px;background:#e0e0e2;"></div>
<div class="b" style="left:1590px;top:348px;width:57px;height:2.4px;background:#0a84ff;"></div>
<svg style="left:1569px;top:356px;" width="15" height="12" viewBox="0 0 15 12"><rect x="0.7" y="0.7" width="13.6" height="10.6" rx="1" fill="none" stroke="#38383d" stroke-width="1.3"/><rect x="9.6" y="1.2" width="4.4" height="9.6" fill="#a8a8ac"/><path d="M9.4 0.8 V11.2" stroke="#38383d" stroke-width="1.1"/><path d="M3.6 3.4 L7 6 L3.6 8.6 Z" fill="#38383d"/></svg>
<div class="a ui" id="l_layout" style="left:1601.5px;top:354px;color:#0060df;">Layout</div>
<div class="a ui" id="l_ber" style="letter-spacing:-.17px;left:1658.5px;top:354px;">Berechnet</div>
<div class="a ui" id="l_aend" style="left:1733.5px;top:354px;">Änderungen</div>
<div class="a ui" id="l_komp" style="letter-spacing:.16px;left:1821px;top:354px;">Kompatibilität</div>
<div class="b" style="left:1897px;top:349px;width:1px;height:24px;background:#e0e0e2;"></div>
<svg style="left:1900.5px;top:358.5px;" width="9" height="5" viewBox="0 0 9 5"><path d="M0.2 0.2 H8.8 L4.5 4.8 Z" fill="#38383d"/></svg>
<div class="b" style="left:1562px;top:374px;width:348px;height:24px;overflow:hidden;"><div class="b" style="left:22px;top:-6px;width:14px;height:14px;border:1px solid #8f8f9d;border-radius:2px;background:#fff;"></div><div class="a ui" id="l_unend" style="left:43px;top:-8px;font-size:11px;color:#38383d;">Unendliche Linien</div></div>
<div class="b" style="left:1562px;top:398px;width:348px;height:1px;background:#e0e0e2;"></div>
<div class="b" style="left:1562px;top:399px;width:348px;height:24px;background:#f9f9fb;"></div>
<div class="b" style="left:1562px;top:423px;width:348px;height:1px;background:#e0e0e2;"></div>
<svg style="left:1569px;top:408.5px;" width="9" height="6" viewBox="0 0 9 6"><path d="M0.3 0.3 H8.7 L4.5 5.4 Z" fill="#8e8e93"/></svg>
<div class="a ui" id="l_boxm" style="left:1582px;top:404px;">Box-Modell</div>
<div class="b" style="left:1600px;top:448px;width:274px;height:128px;background:#fdffdf;"></div>
<svg style="left:1600px;top:448px;" width="274" height="128" viewBox="0 0 274 128"><rect x="0.5" y="0.5" width="273" height="127" fill="none" stroke="#dcdc00" stroke-width="1.1" stroke-dasharray="2 4"/></svg>
<div class="b" style="left:1623px;top:471px;width:228px;height:82px;background:#e3dcff;border:5px solid #727272;"></div>
<div class="b" style="left:1654px;top:501.5px;width:166px;height:21px;background:#cff0fb;"></div>
<svg style="left:1654px;top:501.5px;" width="166" height="21" viewBox="0 0 166 21"><rect x="0.5" y="0.5" width="165" height="20" fill="none" stroke="#2f9be6" stroke-width="1" stroke-dasharray="2 3"/></svg>
<div class="b" style="left:1623px;top:471px;width:44px;height:15px;background:#727272;border-radius:0 0 4px 0;"></div>
<div class="a m" id="l_margin" style="left:1610px;top:451.6px;color:#0c0c0d;">margin</div>
<div class="a m" id="l_border" style="left:1627px;top:470.8px;color:#fff;">border</div>
<div class="a m" id="l_padding" style="left:1640px;top:486.5px;color:#0c0c0d;">padding</div>
<div class="b" style="left:1730px;top:466px;width:12px;height:15px;background:#727272;border-radius:3.5px;"></div>
<div class="b" style="left:1730px;top:544px;width:12px;height:15px;background:#727272;border-radius:3.5px;"></div>
<div class="b" style="left:1619.5px;top:504px;width:12px;height:15px;background:#727272;border-radius:3.5px;"></div>
<div class="b" style="left:1842.5px;top:504px;width:12px;height:15px;background:#727272;border-radius:3.5px;"></div>
<div class="a m" id="l_mt" style="left:1676px;width:120px;text-align:center;top:449px;color:#737373;">0</div>
<div class="a m" id="l_bt" style="left:1676px;width:120px;text-align:center;top:465.8px;color:#fff;">0</div>
<div class="a m" id="l_pt" style="left:1676px;width:120px;text-align:center;top:482.7px;color:#737373;">0</div>
<div class="a m" id="l_pb" style="left:1676px;width:120px;text-align:center;top:525.8px;color:#737373;">0</div>
<div class="a m" id="l_bb" style="left:1676px;width:120px;text-align:center;top:543.7px;color:#fff;">0</div>
<div class="a m" id="l_mb" style="left:1676px;width:120px;text-align:center;top:559.5px;color:#737373;">0</div>
<div class="a m" id="l_ml" style="left:1550.5px;width:120px;text-align:center;top:504px;color:#737373;">0</div>
<div class="a m" id="l_bl" style="left:1565.5px;width:120px;text-align:center;top:504px;color:#fff;">0</div>
<div class="a m" id="l_pl" style="left:1582px;width:120px;text-align:center;top:504px;color:#737373;">0</div>
<div class="a m" id="l_pr" style="left:1771.5px;width:120px;text-align:center;top:504px;color:#737373;">0</div>
<div class="a m" id="l_br" style="left:1788.5px;width:120px;text-align:center;top:504px;color:#fff;">0</div>
<div class="a m" id="l_mr" style="left:1803.5px;width:120px;text-align:center;top:504px;color:#737373;">0</div>
<div class="a m" id="l_size" style="left:1676.3px;width:120px;text-align:center;top:503.8px;color:#0c0c0d;">1920×3767.8</div>
<div class="a ui" id="l_dim" style="letter-spacing:-.23px;left:1582px;top:604px;font-size:11px;color:#38383d;">1920×3767.8</div>
<div class="a ui" id="l_static" style="left:1867.5px;top:604px;font-size:11px;color:#38383d;">static</div>
<svg style="left:1569.5px;top:632.5px;" width="9" height="6" viewBox="0 0 9 6"><path d="M0.3 0.3 H8.7 L4.5 5.4 Z" fill="#8e8e93"/></svg>
<div class="a ui" id="l_bme" style="letter-spacing:-.05px;left:1582.5px;top:626px;">Box-Modell-Eigenschaften</div>
<div class="a m pr" id="l_p0" style="left:1582.5px;top:646px;">box-sizing</div>
<div class="a m vl" id="l_v0" style="left:1761px;top:646px;">border-box</div>
<div class="a m pr" id="l_p1" style="left:1582.5px;top:664px;">display</div>
<div class="a m vl" id="l_v1" style="left:1761px;top:664px;">block</div>
<div class="a m pr" id="l_p2" style="left:1582.5px;top:681px;">float</div>
<div class="a m vl" id="l_v2" style="left:1761px;top:681px;">none</div>
<div class="a m pr" id="l_p3" style="left:1582.5px;top:699px;">line-height</div>
<div class="a m vl" id="l_v3" style="left:1761px;top:699px;">23.8px</div>
<div class="a m pr" id="l_p4" style="left:1582.5px;top:717px;">position</div>
<div class="a m vl" id="l_v4" style="left:1761px;top:717px;">static</div>
<div class="a m pr" id="l_p5" style="left:1582.5px;top:735px;">z-index</div>
<div class="a m vl" id="l_v5" style="left:1761px;top:735px;">auto</div>

<!-- split console -->
<div class="b" style="left:0;top:752px;width:1910px;height:2px;background:#d7d7db;"></div>
<div class="b" style="left:0;top:754px;width:1910px;height:28px;background:#fff;"></div>
<div class="b" style="left:0;top:782px;width:1910px;height:1px;background:#e0e0e2;"></div>
<div class="b" style="left:0;top:783px;width:1910px;height:6px;background:#fdf2f5;"></div>
<div class="b" style="left:24px;top:782px;width:21px;height:2.6px;background:#4a4a4f;border-radius:0 0 1.5px 1.5px;"></div>
<svg style="left:2px;top:760px;" width="14" height="17" viewBox="0 0 14 17"><path d="M0.6 3.4 H13.4" stroke="#0c0c0d" stroke-width="1.5" stroke-linecap="round"/><path d="M4.6 3 V1.9 C4.6 1.2 5 0.8 5.7 0.8 H8.3 C9 0.8 9.4 1.2 9.4 1.9 V3" fill="none" stroke="#0c0c0d" stroke-width="1.4"/><path d="M1.9 3.8 L2.5 14.6 C2.6 15.6 3.2 16.2 4.2 16.2 H9.8 C10.8 16.2 11.4 15.6 11.5 14.6 L12.1 3.8" fill="none" stroke="#0c0c0d" stroke-width="1.5" stroke-linejoin="round"/><path d="M4.7 6.4 V13.2 M7 6.4 V13.2 M9.3 6.4 V13.2" stroke="#0c0c0d" stroke-width=".95" stroke-linecap="round"/></svg>
<div class="b" style="left:24px;top:758px;width:1px;height:20px;background:#e0e0e2;"></div>
<svg style="left:36px;top:763px;" width="10" height="11" viewBox="0 0 10 11"><path d="M0.6 0.7 H9.4 L6 5 V10 L4 8.6 V5 Z" fill="#e0e0e2" stroke="#8e8e93" stroke-width=".9" stroke-linejoin="round"/></svg>
<div class="a ui" id="c_ausg" style="left:50.2px;top:760px;font-size:11px;color:#737373;">Ausgabe filtern</div>
<div class="b" style="left:1436px;top:758px;width:1px;height:20px;background:#e0e0e2;"></div>
<div class="b" style="left:1441.8px;top:757.5px;width:41.8px;height:20.5px;background:#f0f5fe;border-bottom:2px solid #0060df;border-radius:2.5px;"></div>
<div class="a ui" id="c_f" style="left:1448.2px;top:760px;font-size:11px;color:#0060df;letter-spacing:-0.28px;">Fehler</div>
<div class="b" style="left:1486.2px;top:757.5px;width:67.7px;height:20.5px;background:#f0f5fe;border-bottom:2px solid #0060df;border-radius:2.5px;"></div>
<div class="a ui" id="c_w" style="left:1491.8px;top:760px;font-size:11px;color:#0060df;letter-spacing:0px;">Warnungen</div>
<div class="b" style="left:1556px;top:757.5px;width:80.8px;height:20.5px;background:#f0f5fe;border-bottom:2px solid #0060df;border-radius:2.5px;"></div>
<div class="a ui" id="c_i" style="left:1562.4px;top:760px;font-size:11px;color:#0060df;letter-spacing:0.11px;">Informationen</div>
<div class="b" style="left:1638.8px;top:757.5px;width:30px;height:20.5px;background:#f0f5fe;border-bottom:2px solid #0060df;border-radius:2.5px;"></div>
<div class="a ui" id="c_l" style="left:1645.2px;top:760px;font-size:11px;color:#0060df;letter-spacing:0px;">Log</div>
<div class="b" style="left:1670.9px;top:757.5px;width:44.9px;height:20.5px;background:#f0f5fe;border-bottom:2px solid #0060df;border-radius:2.5px;"></div>
<div class="a ui" id="c_d" style="left:1677.3px;top:760px;font-size:11px;color:#0060df;letter-spacing:0px;">Debug</div>
<div class="b" style="left:1722px;top:758px;width:1px;height:20px;background:#e0e0e2;"></div>
<div class="a ui" id="c_css" style="left:1735px;top:760px;font-size:10.5px;letter-spacing:-1px;color:#38383d;">CSS</div>
<div class="a ui" id="c_xhr" style="left:1767.5px;top:760px;font-size:11px;letter-spacing:-.73px;color:#38383d;">XHR</div>
<div class="a ui" id="c_anf" style="left:1802.2px;top:760px;font-size:11px;color:#38383d;">Anfragen</div>
<div class="b" style="left:1855px;top:758px;width:1px;height:20px;background:#e0e0e2;"></div>
<svg style="left:1861.6px;top:760.6px;" width="16.4" height="16.4" viewBox="0 0 16.4 16.4"><g fill="#0c0c0d"><rect x="7.45" y="0.3" width="1.5" height="3.8" rx=".4" transform="rotate(0 8.2 8.2)"/><rect x="7.45" y="0.3" width="1.5" height="3.8" rx=".4" transform="rotate(45 8.2 8.2)"/><rect x="7.45" y="0.3" width="1.5" height="3.8" rx=".4" transform="rotate(90 8.2 8.2)"/><rect x="7.45" y="0.3" width="1.5" height="3.8" rx=".4" transform="rotate(135 8.2 8.2)"/><rect x="7.45" y="0.3" width="1.5" height="3.8" rx=".4" transform="rotate(180 8.2 8.2)"/><rect x="7.45" y="0.3" width="1.5" height="3.8" rx=".4" transform="rotate(225 8.2 8.2)"/><rect x="7.45" y="0.3" width="1.5" height="3.8" rx=".4" transform="rotate(270 8.2 8.2)"/><rect x="7.45" y="0.3" width="1.5" height="3.8" rx=".4" transform="rotate(315 8.2 8.2)"/></g><circle cx="8.2" cy="8.2" r="4.3" fill="none" stroke="#0c0c0d" stroke-width="1.5"/></svg>
<svg style="left:1893.4px;top:763.6px;" width="11" height="11" viewBox="0 0 11 11"><path d="M0.7 0.7 L10.3 10.3 M10.3 0.7 L0.7 10.3" stroke="#0c0c0d" stroke-width="1.4" stroke-linecap="round"/></svg>

</body>
</html>
